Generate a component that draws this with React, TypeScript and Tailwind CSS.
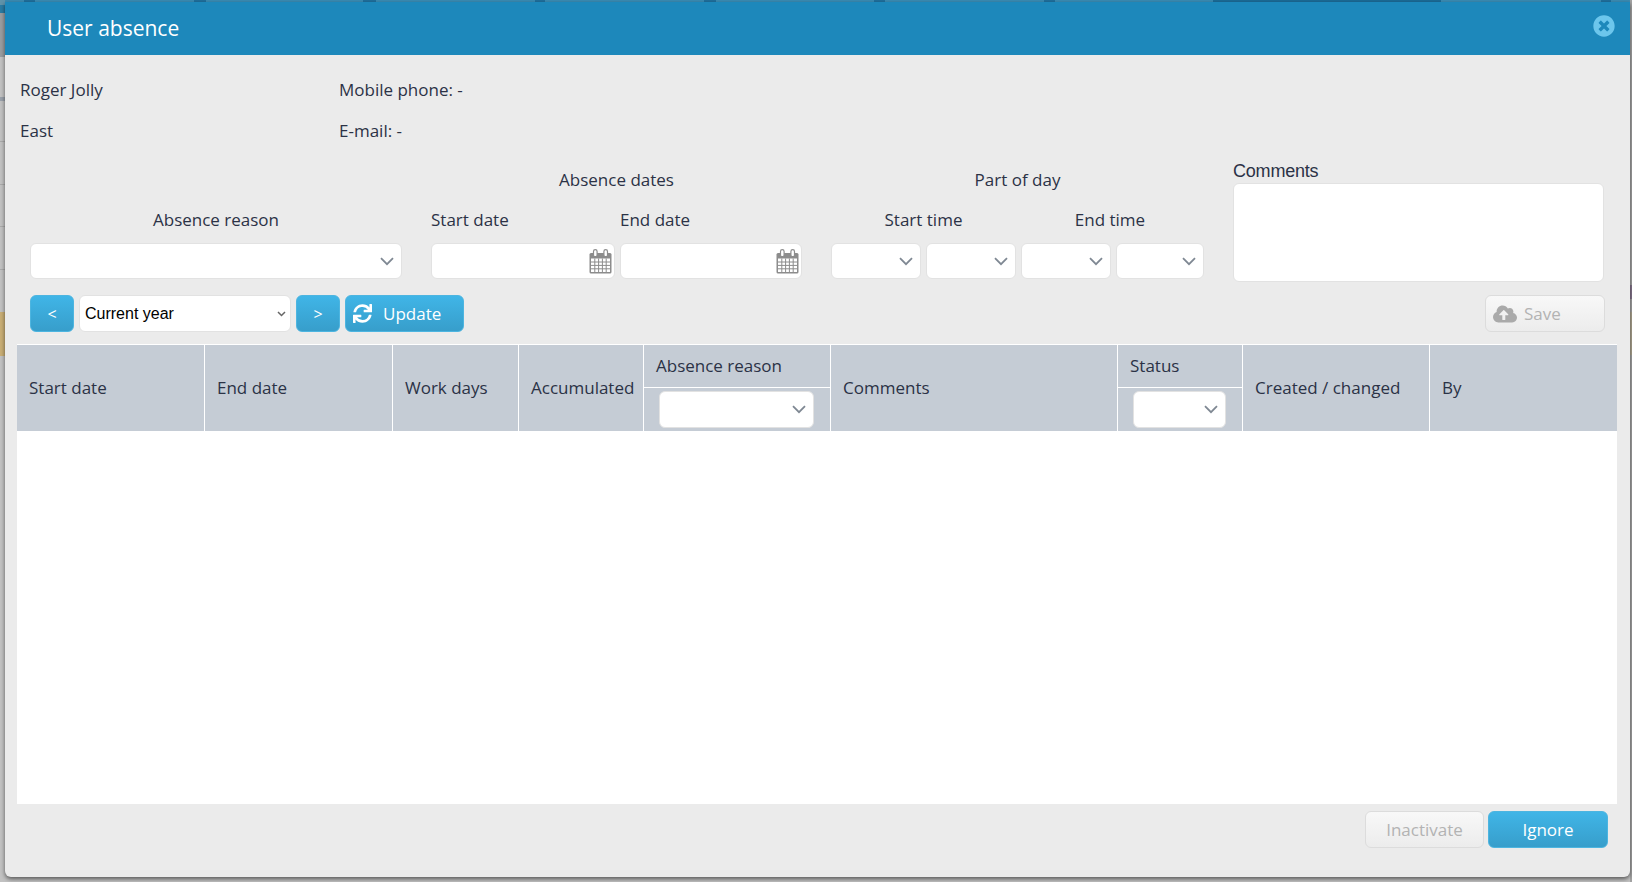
import { FaCloudUploadAlt, FaSync, FaTimesCircle } from "react-icons/fa";

const FONT = "font-['Open_Sans','Noto_Sans',sans-serif]";

function Chevron({ small = false }: { small?: boolean }) {
  return small ? (
    <svg width="9" height="6" viewBox="0 0 9 6" className="shrink-0">
      <path d="M1 1l3.5 3.5L8 1" fill="none" stroke="#666" strokeWidth="1.5" />
    </svg>
  ) : (
    <svg width="14" height="9" viewBox="0 0 14 9" className="shrink-0">
      <path d="M1 1.2l6 6 6-6" fill="none" stroke="#7f8893" strokeWidth="1.8" />
    </svg>
  );
}

function Calendar() {
  return (
    <svg width="23" height="25" viewBox="0 0 23 25" className="shrink-0">
      <rect x="0.5" y="4" width="22" height="20.5" rx="1.5" fill="#8c8c8c" />
      <rect x="2" y="9.5" width="19" height="13.5" fill="#fff" />
      <path d="M2 13h19M2 16.4h19M2 19.8h19M5.8 9.5V23M9.6 9.5V23M13.4 9.5V23M17.2 9.5V23" stroke="#8c8c8c" strokeWidth="1" />
      <rect x="4.5" y="0.7" width="3.6" height="7" rx="1.8" fill="#fff" stroke="#8c8c8c" strokeWidth="1.2" />
      <rect x="14.9" y="0.7" width="3.6" height="7" rx="1.8" fill="#fff" stroke="#8c8c8c" strokeWidth="1.2" />
    </svg>
  );
}

function Select({ className }: { className: string }) {
  return (
    <div className={`flex h-[36px] items-center justify-end rounded-[6px] border border-[#e2e2e2] bg-white pr-[7px] ${className}`}>
      <Chevron />
    </div>
  );
}

function DateInput({ className }: { className: string }) {
  return (
    <div className={`flex h-[36px] items-center justify-end rounded-[6px] border border-[#e2e2e2] bg-white pr-[2px] ${className}`}>
      <Calendar />
    </div>
  );
}

const blueBtn =
  "flex h-[37px] items-center rounded-[6px] border border-[#4db5e0] bg-gradient-to-b from-[#40b5e7] to-[#379ecb] text-white";
const greyBtn =
  "flex h-[37px] items-center rounded-[6px] border border-[#dcdcdc] bg-gradient-to-b from-[#f8f8f8] to-[#ececec] text-[#b3b3b3]";

const columns = [
  "Start date",
  "End date",
  "Work days",
  "Accumulated",
  "Absence reason",
  "Comments",
  "Status",
  "Created / changed",
  "By",
];

function HeaderCell({ label, last }: { label: string; last: boolean }) {
  const border = last ? "" : "border-r border-white";
  if (label === "Absence reason") {
    return (
      <div className={`flex flex-col ${border}`}>
        <div className="flex h-[43px] items-center border-b border-white pl-[12px]">{label}</div>
        <div className="flex flex-1 items-center pl-[15px]">
          <Select className="h-[37px] w-[155px]" />
        </div>
      </div>
    );
  }
  if (label === "Status") {
    return (
      <div className={`flex flex-col ${border}`}>
        <div className="flex h-[43px] items-center border-b border-white pl-[12px]">{label}</div>
        <div className="flex flex-1 items-center pl-[15px]">
          <Select className="h-[37px] w-[93px]" />
        </div>
      </div>
    );
  }
  return <div className={`flex items-center pl-[12px] ${border}`}>{label}</div>;
}

function Backdrop() {
  return (
    <div className="absolute inset-0">
      <div className="absolute left-0 top-0 flex h-[2px] w-full bg-[#3a8bb3]">
        <div className="ml-[24px] w-[11px] bg-[#1f6f9c]" />
        <div className="ml-[159px] w-[12px] bg-[#1f6f9c]" />
        <div className="ml-[157px] w-[13px] bg-[#1f6f9c]" />
        <div className="ml-[159px] w-[10px] bg-[#1f6f9c]" />
        <div className="ml-[159px] w-[12px] bg-[#1f6f9c]" />
        <div className="ml-[158px] w-[11px] bg-[#1f6f9c]" />
        <div className="ml-[159px] w-[11px] bg-[#1f6f9c]" />
        <div className="ml-[158px] w-[228px] bg-[#1b6b97]" />
        <div className="ml-[160px] w-[10px] bg-[#1f6f9c]" />
      </div>
      <div className="absolute left-0 top-0 flex h-full w-[5px] flex-col bg-[#c2c2c2]">
        <div className="h-[5px] bg-[#5f93aa]" />
        <div className="h-[8px] bg-[#2a7ba3]" />
        <div className="h-[44px] bg-[#9a9da0]" />
        <div className="h-[40px] bg-[#c2c2c2]" />
        <div className="h-[4px] bg-[#9aa1aa]" />
        <div className="h-[41px] border-b border-[#aaa]" />
        <div className="h-[43px] border-b border-[#aaa]" />
        <div className="h-[42px] border-b border-[#aaa]" />
        <div className="h-[43px] border-b border-[#aaa]" />
        <div className="h-[42px]" />
        <div className="h-[44px] bg-[#c9ae75]" />
      </div>
      <div className="absolute right-0 top-0 flex h-full w-[2px] flex-col bg-[#a3a3a3]">
        <div className="h-[285px]" />
        <div className="h-[14px] bg-[#85758c]" />
        <div className="h-[13px]" />
        <div className="h-[43px] bg-[#aca48f]" />
      </div>
    </div>
  );
}

export default function App() {
  return (
    <div className={`relative h-[882px] w-[1632px] overflow-hidden bg-[#c2c2c2] text-[#2b3246] ${FONT}`}>
      <Backdrop />
      <div className="relative ml-[5px] mt-[2px] flex h-[875px] w-[1625px] flex-col rounded-b-[6px] bg-[#ebebeb] shadow-[0_2px_4px_rgba(0,0,0,0.55)]">
        <div className="flex h-[53px] shrink-0 items-center justify-between bg-[#1d88bb] pl-[42px] pr-[15px] text-[21px] text-white">
          <span>User absence</span>
          <FaTimesCircle className="mb-[5px] text-[22px] text-[#6cc6ec]" />
        </div>

        <div className="flex flex-1 flex-col pl-[12px] text-[17px]">
          <div className="mt-[14px] grid h-[82px] grid-cols-[319px_1fr] grid-rows-2 items-center pl-[3px]">
            <span>Roger Jolly</span>
            <span>Mobile phone: -</span>
            <span>East</span>
            <span>E-mail: -</span>
          </div>

          <div className="ml-[13px] mt-[8px] flex items-start">
            <div className="flex w-[372px] flex-col">
              <div className="flex h-[41px] items-end justify-center" />
              <div className="flex h-[40px] items-center justify-center">Absence reason</div>
              <Select className="mt-[3px] w-[372px]" />
            </div>

            <div className="ml-[29px] flex w-[371px] flex-col">
              <div className="flex h-[41px] items-center justify-center">Absence dates</div>
              <div className="flex h-[40px] items-center">
                <span className="w-[189px]">Start date</span>
                <span>End date</span>
              </div>
              <div className="mt-[3px] flex gap-[5px]">
                <DateInput className="w-[184px]" />
                <DateInput className="w-[182px]" />
              </div>
            </div>

            <div className="ml-[29px] flex w-[373px] flex-col">
              <div className="flex h-[41px] items-center justify-center">Part of day</div>
              <div className="flex h-[40px] items-center text-center">
                <span className="w-[185px]">Start time</span>
                <span className="w-[188px]">End time</span>
              </div>
              <div className="mt-[3px] flex gap-[5px]">
                <Select className="w-[90px]" />
                <Select className="w-[90px]" />
                <Select className="w-[90px]" />
                <Select className="w-[88px]" />
              </div>
            </div>

            <div className="ml-[29px] flex w-[371px] flex-col">
              <div className="flex h-[24px] items-center font-['Liberation_Sans',sans-serif] text-[18px] tracking-[-0.2px]">Comments</div>
              <div className="h-[99px] rounded-[6px] border border-[#e2e2e2] bg-white" />
            </div>
          </div>

          <div className="ml-[13px] mt-[13px] flex h-[37px] w-[1575px] items-center gap-[5px]">
            <button className={`${blueBtn} w-[44px] justify-center text-[16px]`}>&lt;</button>
            <div className="flex h-[37px] w-[212px] items-center justify-between rounded-[6px] border border-[#e2e2e2] bg-white pl-[5px] pr-[4px] font-['Liberation_Sans',sans-serif] text-[16px] text-black">
              <span>Current year</span>
              <Chevron small />
            </div>
            <button className={`${blueBtn} w-[44px] justify-center text-[16px]`}>&gt;</button>
            <button className={`${blueBtn} w-[119px] gap-[11px] pl-[7px]`}>
              <FaSync className="text-[19px]" />
              <span>Update</span>
            </button>
            <button className={`${greyBtn} ml-auto w-[120px] gap-[7px] pl-[7px]`}>
              <FaCloudUploadAlt className="text-[24px] text-[#aaaaaa]" />
              <span>Save</span>
            </button>
          </div>

          <div className="mt-[12px] flex h-[460px] w-[1600px] flex-col bg-white">
            <div className="grid h-[87px] grid-cols-[188px_188px_126px_125px_187px_287px_125px_187px_187px] border-t border-white bg-[#c5ccd5]">
              {columns.map((c, i) => (
                <HeaderCell key={c} label={c} last={i === columns.length - 1} />
              ))}
            </div>
          </div>

          <div className="mt-[7px] flex w-[1591px] justify-end gap-[4px]">
            <button className={`${greyBtn} w-[119px] justify-center`}>Inactivate</button>
            <button className={`${blueBtn} w-[120px] justify-center`}>Ignore</button>
          </div>
        </div>
      </div>
    </div>
  );
}
